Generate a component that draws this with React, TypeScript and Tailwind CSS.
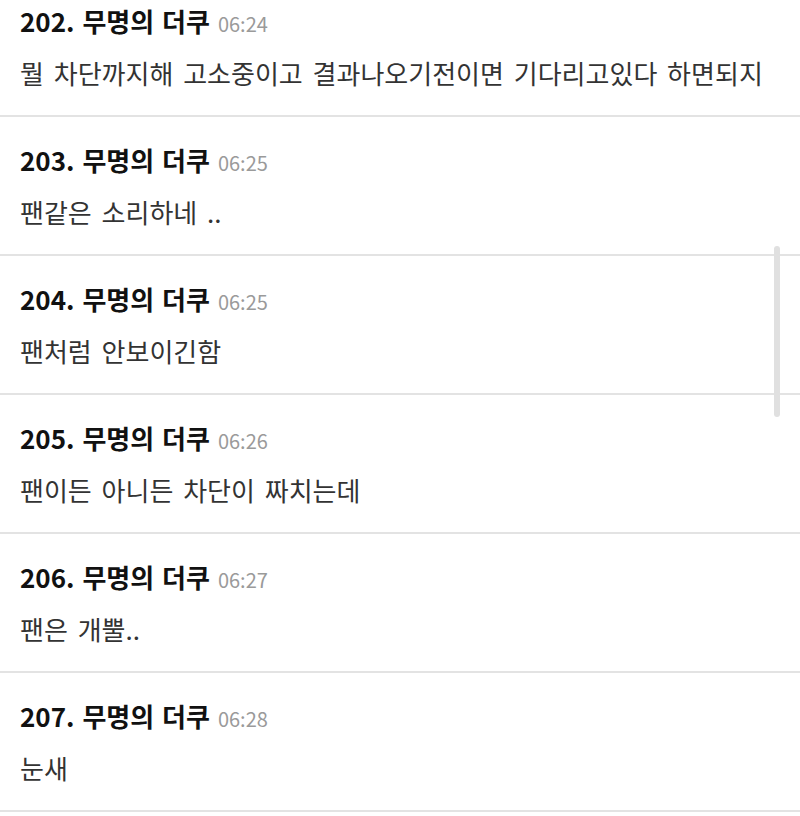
import React from "react";

type Comment = { no: number; time: string; text: string };

const comments: Comment[] = [
  { no: 202, time: "06:24", text: "뭘 차단까지해 고소중이고 결과나오기전이면 기다리고있다 하면되지" },
  { no: 203, time: "06:25", text: "팬같은 소리하네 .." },
  { no: 204, time: "06:25", text: "팬처럼 안보이긴함" },
  { no: 205, time: "06:26", text: "팬이든 아니든 차단이 짜치는데" },
  { no: 206, time: "06:27", text: "팬은 개뿔.." },
  { no: 207, time: "06:28", text: "눈새" },
];

function CommentRow({ c }: { c: Comment }) {
  return (
    <li className="border-b-2 border-[#e3e3e3] px-5 pt-[27px] pb-[24px]">
      <div className="flex items-baseline gap-[8px] h-[32px] leading-[32px]">
        <span className="text-[26px] font-bold text-[#111] [word-spacing:2px]">
          {c.no}. 무명의 더쿠
        </span>
        <span className="text-[20px] text-[#9a9a9a]">{c.time}</span>
      </div>
      <p className="mt-[18px] h-[36px] leading-[36px] text-[26px] text-[#333] [word-spacing:4px]">
        {c.text}
      </p>
    </li>
  );
}

export default function App() {
  return (
    <div
      className="relative w-[800px] h-[816px] overflow-hidden bg-white"
      style={{ fontFamily: '"Noto Sans CJK KR", "Noto Sans", sans-serif' }}
    >
      <ul className="-mt-[22px]">
        {comments.map((c) => (
          <CommentRow key={c.no} c={c} />
        ))}
      </ul>
      {/* scrollbar thumb */}
      <div className="absolute right-[20px] top-[246px] w-[6px] h-[171px] rounded-full bg-[#e0e0e0]" />
    </div>
  );
}
